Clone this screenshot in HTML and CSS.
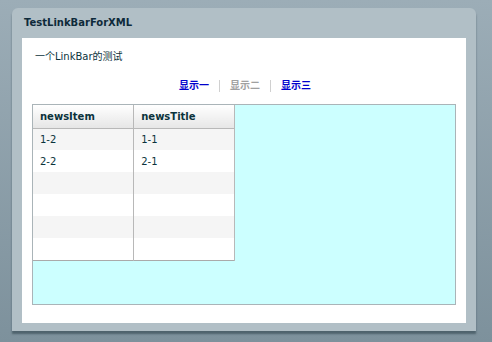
FILE: index.html
```html
<!DOCTYPE html>
<html lang="zh-CN">
<head>
    <meta charset="UTF-8">
    <title>TestLinkBarForXML</title>
    <link rel="stylesheet" href="styles.css">
</head>
<body>
    <div class="panel">
        <div class="panel-title">TestLinkBarForXML</div>
        <div class="panel-body">
            <p class="intro">一个LinkBar的测试</p>
            <div class="linkbar">
                <span class="link">显示一</span>
                <span class="sep"></span>
                <span class="link disabled">显示二</span>
                <span class="sep"></span>
                <span class="link">显示三</span>
            </div>
            <div class="stack">
                <table class="grid">
                    <thead>
                        <tr><th>newsItem</th><th>newsTitle</th></tr>
                    </thead>
                    <tbody>
                        <tr><td>1-2</td><td>1-1</td></tr>
                        <tr><td>2-2</td><td>2-1</td></tr>
                        <tr><td></td><td></td></tr>
                        <tr><td></td><td></td></tr>
                        <tr><td></td><td></td></tr>
                        <tr><td></td><td></td></tr>
                    </tbody>
                </table>
            </div>
        </div>
    </div>
</body>
</html>
```

FILE: styles.css
```css
* {
    box-sizing: border-box;
}

html, body {
    height: 100%;
}

body {
    margin: 0;
    padding: 8px 16px 0 12px;
    background: linear-gradient(#9cadb7, #7d919c);
    font-family: Verdana, 'DejaVu Sans', 'Noto Sans CJK SC', sans-serif;
    font-size: 10px;
    color: #0b333c;
}

.panel {
    width: 464px;
    background-color: #b1bfc6;
    border-radius: 6px 6px 0 0;
    padding: 0 10px 8px 10px;
    box-shadow: 0 3px 2px rgba(40, 60, 70, 0.55);
}

.panel-title {
    height: 30px;
    line-height: 30px;
    padding-left: 2px;
    font-weight: bold;
    font-size: 10px;
    color: #0e2a3a;
}

.panel-body {
    background-color: #fff;
    height: 285px;
    padding: 12px 10px 0 10px;
}

.intro {
    margin: 0 0 0 3px;
    font-size: 10px;
    line-height: 14px;
}

.linkbar {
    display: flex;
    justify-content: center;
    align-items: center;
    margin-top: 15px;
    height: 14px;
    padding-left: 2px;
}

.link {
    font-weight: bold;
    color: #0000cc;
    font-size: 10px;
    line-height: 14px;
    padding: 0 8px;
    cursor: pointer;
}

.link.disabled {
    color: #a0a0a0;
    cursor: default;
}

.sep {
    width: 1px;
    height: 12px;
    background-color: #d0d0d0;
    margin: 0 2px;
}

.stack {
    margin-top: 11px;
    height: 201px;
    background-color: #ccffff;
    border: 1px solid #aab4b8;
}

.grid {
    border-collapse: collapse;
    width: 202px;
    border: 1px solid #aaa;
    border-top: none;
    border-left: none;
    font-size: 10px;
}

.grid th {
    height: 23px;
    text-align: left;
    padding: 0 7px;
    background: linear-gradient(#ffffff, #e6e6e6);
    border-bottom: 1px solid #b8b8b8;
    border-right: 1px solid #b8b8b8;
    color: #0b333c;
    width: 102px;
}

.grid td {
    height: 22px;
    padding: 0 7px;
    border-right: 1px solid #b8b8b8;
    background-color: #fff;
}

.grid tbody tr:nth-child(odd) td {
    background-color: #f5f5f5;
}
```
